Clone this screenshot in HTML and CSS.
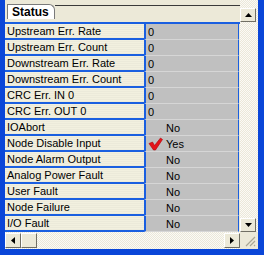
FILE: index.html
```html
<!DOCTYPE html>
<html>
<head>
<meta charset="utf-8">
<link rel="stylesheet" href="styles.css">
</head>
<body>
<div class="window">
  <div class="inner">
    <div class="tabstrip">
      <div class="tab">Status</div>
      <div class="tabline"></div>
    </div>
    <div class="vscroll">
      <div class="sbtn up"><svg width="7" height="4" viewBox="0 0 7 4"><path d="M0 4 L3.5 0 L7 4 Z" fill="#000"/></svg></div>
      <div class="track"></div>
      <div class="sbtn down"><svg width="7" height="4" viewBox="0 0 7 4"><path d="M0 0 L3.5 4 L7 0 Z" fill="#000"/></svg></div>
    </div>
    <div class="grid">
      <div class="row"><div class="lab">Upstream Err. Rate</div><div class="val">0</div></div>
      <div class="row"><div class="lab">Upstream Err. Count</div><div class="val">0</div></div>
      <div class="row"><div class="lab">Downstream Err. Rate</div><div class="val">0</div></div>
      <div class="row"><div class="lab">Downstream Err. Count</div><div class="val">0</div></div>
      <div class="row"><div class="lab">CRC Err. IN 0</div><div class="val">0</div></div>
      <div class="row"><div class="lab">CRC Err. OUT 0</div><div class="val">0</div></div>
      <div class="row"><div class="lab">IOAbort</div><div class="val bool"><span class="chk"></span>No</div></div>
      <div class="row"><div class="lab">Node Disable Input</div><div class="val bool"><span class="chk"><svg width="15" height="14" viewBox="0 0 15 14"><path d="M1 6.5 L4.5 5 L6.5 8.5 L12.5 1 L14.5 2.5 L7.5 13 L5.5 13 Z" fill="#e4141b" stroke="#b00008" stroke-width="0.6"/></svg></span>Yes</div></div>
      <div class="row"><div class="lab">Node Alarm Output</div><div class="val bool"><span class="chk"></span>No</div></div>
      <div class="row"><div class="lab">Analog Power Fault</div><div class="val bool"><span class="chk"></span>No</div></div>
      <div class="row"><div class="lab">User Fault</div><div class="val bool"><span class="chk"></span>No</div></div>
      <div class="row"><div class="lab">Node Failure</div><div class="val bool"><span class="chk"></span>No</div></div>
      <div class="row"><div class="lab">I/O Fault</div><div class="val bool"><span class="chk"></span>No</div></div>
    </div>
    <div class="hscroll">
      <div class="sbtn left"><svg width="4" height="7" viewBox="0 0 4 7"><path d="M4 0 L0 3.5 L4 7 Z" fill="#000"/></svg></div>
      <div class="thumb"></div>
      <div class="htrack"></div>
      <div class="sbtn right"><svg width="4" height="7" viewBox="0 0 4 7"><path d="M0 0 L4 3.5 L0 7 Z" fill="#000"/></svg></div>
    </div>
    <div class="grip"><svg width="12" height="12" viewBox="0 0 12 12"><path d="M11 2 L2 11 M11 6 L6 11 M11 10 L10 11" stroke="#a9a695" stroke-width="1.2"/></svg></div>
  </div>
</div>
</body>
</html>
```

FILE: styles.css
```css
html, body {
  margin: 0;
  padding: 0;
  background: #ece9d8;
}
.window {
  width: 264px;
  height: 255px;
  box-sizing: border-box;
  border-left: 5px solid #0a46d8;
  border-right: 6px solid #0a46d8;
  border-bottom: 6px solid #0a46d8;
  background: #ece9d8;
  font-family: "Liberation Sans", Arial, sans-serif;
  font-size: 11px;
  color: #000;
}
.inner {
  display: grid;
  grid-template-columns: 235px 18px;
  grid-template-rows: 22px 210px 17px;
  height: 249px;
}
.tabstrip {
  grid-column: 1 / 3;
  grid-row: 1;
  display: flex;
  align-items: flex-start;
}
.tab {
  margin: 4px 0 0 2px;
  width: 42px;
  height: 14px;
  background: #fff;
  border: 1px solid #7a7a7a;
  border-bottom: none;
  border-top-right-radius: 6px;
  font-weight: bold;
  font-size: 12px;
  line-height: 14px;
  padding-left: 4px;
}
.tabline {
  flex: 1;
  margin-top: 5px;
  height: 1px;
  background: #3a3a3a;
}
.dither {
  background: #f4f3ec;
}
.vscroll {
  grid-column: 2;
  grid-row: 1 / 3;
  display: flex;
  flex-direction: column;
  padding-top: 8px;
  background-color: #f5f4ee;
  background-image: conic-gradient(#ebe8d9 25%, #fbfaf6 25% 50%, #ebe8d9 50% 75%, #fbfaf6 75%);
  background-size: 2px 2px;
}
.vscroll .track { flex: 1; }
.sbtn {
  box-sizing: border-box;
  width: 16px;
  height: 14px;
  background: #ece9d8;
  border-top: 1px solid #fff;
  border-left: 1px solid #fff;
  border-right: 1px solid #716f64;
  border-bottom: 1px solid #716f64;
  display: flex;
  align-items: center;
  justify-content: center;
}
.grid {
  grid-column: 1;
  grid-row: 2;
  display: flex;
  flex-direction: column;
  border-top: 2px solid #1a5fe0;
}
.row {
  display: flex;
  height: 16px;
}
.lab {
  width: 139px;
  box-sizing: border-box;
  height: 16px;
  background: repeating-linear-gradient(#f2f0df 0 1px, #eceada 1px 2px);
  border-bottom: 2px solid #1a5fe0;
  padding-left: 2px;
  line-height: 15px;
  font-size: 11px;
  white-space: nowrap;
}
.val {
  width: 95px;
  box-sizing: border-box;
  height: 16px;
  background: #c0c0c0;
  border-left: 2px solid #1a5fe0;
  border-right: 1px solid #1a5fe0;
  border-bottom: 1px solid #d6d6d6;
  padding-left: 2px;
  padding-top: 1px;
  line-height: 15px;
  font-size: 11px;
  display: flex;
  align-items: center;
}
.chk {
  width: 18px;
  height: 14px;
  display: flex;
  align-items: center;
}
.hscroll {
  grid-column: 1;
  grid-row: 3;
  display: flex;
  align-items: flex-start;
  padding-top: 1px;
  background-color: #f5f4ee;
  background-image: conic-gradient(#ebe8d9 25%, #fbfaf6 25% 50%, #ebe8d9 50% 75%, #fbfaf6 75%);
  background-size: 2px 2px;
}
.hscroll .sbtn { width: 16px; height: 15px; }
.thumb {
  box-sizing: border-box;
  width: 16px;
  height: 15px;
  background: #ece9d8;
  border-top: 1px solid #fff;
  border-left: 1px solid #fff;
  border-right: 1px solid #716f64;
  border-bottom: 1px solid #716f64;
}
.htrack { flex: 1; }
.grip {
  grid-column: 2;
  grid-row: 3;
  display: flex;
  align-items: flex-end;
  justify-content: flex-end;
  padding: 0 2px 2px 0;
  background: #ece9d8;
}
```
